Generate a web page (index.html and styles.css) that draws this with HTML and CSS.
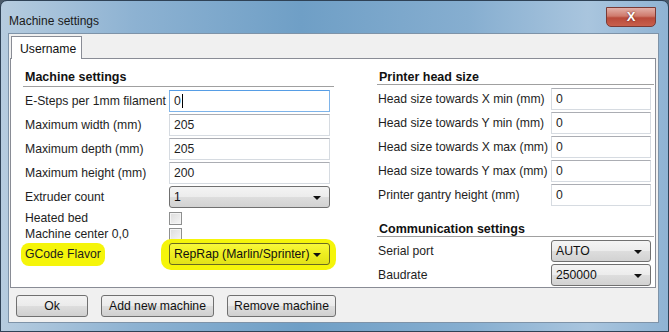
FILE: index.html
```html
<!DOCTYPE html>
<html>
<head>
<meta charset="utf-8">
<link rel="stylesheet" href="styles.css">
</head>
<body>
<div class="window">
  <div class="titlebar">
    <span class="title">Machine settings</span>
    <span class="close">X</span>
  </div>
  <div class="client">
    <div class="tabstrip"><div class="tab">Username</div></div>
    <div class="panel">
      <div class="col left">
        <div class="heading">Machine settings</div>
        <div class="row"><span class="lbl">E-Steps per 1mm filament</span><span class="input w-left focus">0<span class="caret"></span></span></div>
        <div class="row"><span class="lbl">Maximum width (mm)</span><span class="input w-left">205</span></div>
        <div class="row"><span class="lbl">Maximum depth (mm)</span><span class="input w-left">205</span></div>
        <div class="row"><span class="lbl">Maximum height (mm)</span><span class="input w-left">200</span></div>
        <div class="row"><span class="lbl">Extruder count</span><span class="select w-left"><span>1</span><span class="arrow"></span></span></div>
        <div class="row small"><span class="lbl">Heated bed</span><span class="check"></span></div>
        <div class="row small"><span class="lbl">Machine center 0,0</span><span class="check"></span></div>
        <div class="row hl-row">
          <span class="lbl"><span class="hl-label">GCode Flavor</span></span>
          <span class="hl-select"><span class="select w-left yellow"><span>RepRap (Marlin/Sprinter)</span><span class="arrow"></span></span></span>
        </div>
      </div>
      <div class="col right">
        <div class="heading">Printer head size</div>
        <div class="row"><span class="lbl">Head size towards X min (mm)</span><span class="input w-right">0</span></div>
        <div class="row"><span class="lbl">Head size towards Y min (mm)</span><span class="input w-right">0</span></div>
        <div class="row"><span class="lbl">Head size towards X max (mm)</span><span class="input w-right">0</span></div>
        <div class="row"><span class="lbl">Head size towards Y max (mm)</span><span class="input w-right">0</span></div>
        <div class="row"><span class="lbl">Printer gantry height (mm)</span><span class="input w-right">0</span></div>
        <div class="heading second">Communication settings</div>
        <div class="row"><span class="lbl">Serial port</span><span class="select w-right"><span>AUTO</span><span class="arrow"></span></span></div>
        <div class="row"><span class="lbl">Baudrate</span><span class="select w-right"><span>250000</span><span class="arrow"></span></span></div>
      </div>
    </div>
    <div class="buttons">
      <button class="btn b-ok">Ok</button>
      <button class="btn b-add">Add new machine</button>
      <button class="btn b-rem">Remove machine</button>
    </div>
  </div>
</div>
</body>
</html>
```

FILE: styles.css
```css
* { box-sizing: border-box; }
html, body { margin: 0; padding: 0; background: #4a5a6a; }
body { width: 669px; height: 332px; overflow: hidden; font-family: "Liberation Sans", Arial, sans-serif; }

.window {
  width: 669px; height: 332px;
  background: linear-gradient(90deg, #b6ccdf 0%, #8db2d2 20%, #6f9fc6 45%, #86aed0 70%, #a9c5de 88%, #8fb3d3 100%);
  border: 1px solid #2f4256;
  border-radius: 7px 7px 0 0;
  display: flex; flex-direction: column;
  padding: 0 9px 8px 7px;
}
.titlebar {
  height: 32px; display: flex; align-items: flex-start; justify-content: space-between;
}
.title { font-family: "Liberation Sans", sans-serif; font-size: 12px; color: #1a1a1a; margin-top: 13px; margin-left: 1px; }
.close {
  margin-top: 6px; margin-right: 3px;
  width: 50px; height: 20px;
  border: 1px solid #7a3a35; border-radius: 0 0 5px 5px;
  background: linear-gradient(180deg, #e3b0a8 0%, #cf7a6c 45%, #b94a3a 55%, #c8604c 100%);
  color: #fff; font-weight: bold; font-size: 13px; text-align: center; line-height: 18px;
  text-shadow: 0 0 2px #5a1a10;
}
.client {
  flex: 1; background: #f0f0f0; border: 1px solid #7e93a8;
  display: flex; flex-direction: column; padding: 0 2px 0 1px;
}
.tabstrip { height: 24px; display: flex; align-items: flex-end; padding-left: 1px; }
.tab {
  height: 23px; width: 71px; background: #fff;
  border: 1px solid #898c95; border-bottom: none;
  font-size: 12.2px; padding: 5px 0 0 8px; color: #111;
  position: relative; top: 1px;
}
.panel {
  height: 230px; background: #fff; border: 1px solid #898c95;
  display: flex; padding: 11px 0 0 12px; gap: 43px;
}
.col { display: flex; flex-direction: column; }
.left { width: 311px; }
.right { width: 277px; }
.heading {
  font-weight: bold; font-size: 12.5px; color: #111;
  height: 17px; border-bottom: 1px solid #a0a0a0; padding-left: 2px; line-height: 14px;
  margin-bottom: 3px;
}
.heading.second { margin-top: 14px; height: 18px; }
.row { display: flex; align-items: center; height: 22px; margin-bottom: 2px; font-size: 12.2px; color: #1e1e1e; white-space: nowrap; }
.row.small { height: 16px; margin-bottom: 0; }
.lbl { width: 146px; flex: none; padding-left: 2px; white-space: nowrap; }
.right .lbl { width: 174px; padding-left: 1px; }
.input {
  flex: none;
  height: 22px; border: 1px solid #d6dbe1; border-top-color: #abadb3;
  padding: 3px 0 0 4px; font-size: 12.2px; background: #fff; display: flex; align-items: flex-start;
}
.input.focus { border-color: #7eb4ea; border-top-color: #569de5; }
.caret { display: inline-block; width: 1px; height: 14px; background: #000; margin-left: 1px; }
.w-left { width: 161px; }
.w-right { width: 100px; }
.select {
  flex: none;
  height: 22px; border: 1px solid #707070; border-radius: 3px;
  background: linear-gradient(180deg, #f4f4f4 0%, #ececec 48%, #dddddd 52%, #d2d2d2 100%);
  display: flex; align-items: center; justify-content: space-between;
  padding: 0 8px 0 4px; font-size: 12.2px; color: #111; white-space: nowrap;
}
.arrow { flex: none; width: 0; height: 0; border-left: 4px solid transparent; border-right: 4px solid transparent; border-top: 4px solid #111; margin-top: 2px; }
.check {
  flex: none;
  width: 13px; height: 13px; border: 1px solid #8e8f8f;
  background: linear-gradient(135deg, #dcdcdc 0%, #f5f5f5 100%);
  box-shadow: inset 0 0 0 1px #f4f4f4;
}
.hl-row { margin-top: 1px; height: 22px; }
.hl-label { background: #f5f50a; border-radius: 8px; padding: 4px 4px 5px 4px; margin-left: -4px; }
.hl-select { flex: none; background: #f5f50a; border-radius: 10px; padding: 4px 6px 5px 8px; margin-left: -8px; display: flex; }
.select.yellow { background: linear-gradient(180deg, #f8f83a 0%, #eeee20 50%, #e2e218 100%); border-color: #6a6a20; }
.buttons { flex: 1; display: flex; align-items: flex-start; padding: 7px 0 0 6px; gap: 13px; }
.btn {
  height: 22px; border: 1px solid #707070; border-radius: 3px;
  background: linear-gradient(180deg, #f2f2f2 0%, #ebebeb 48%, #dddddd 52%, #cfcfcf 100%);
  font-family: "Liberation Sans", Arial, sans-serif; font-size: 12.2px; color: #111; padding: 0;
}
.b-ok { width: 72px; }
.b-add { width: 113px; }
.b-rem { width: 109px; }
```
